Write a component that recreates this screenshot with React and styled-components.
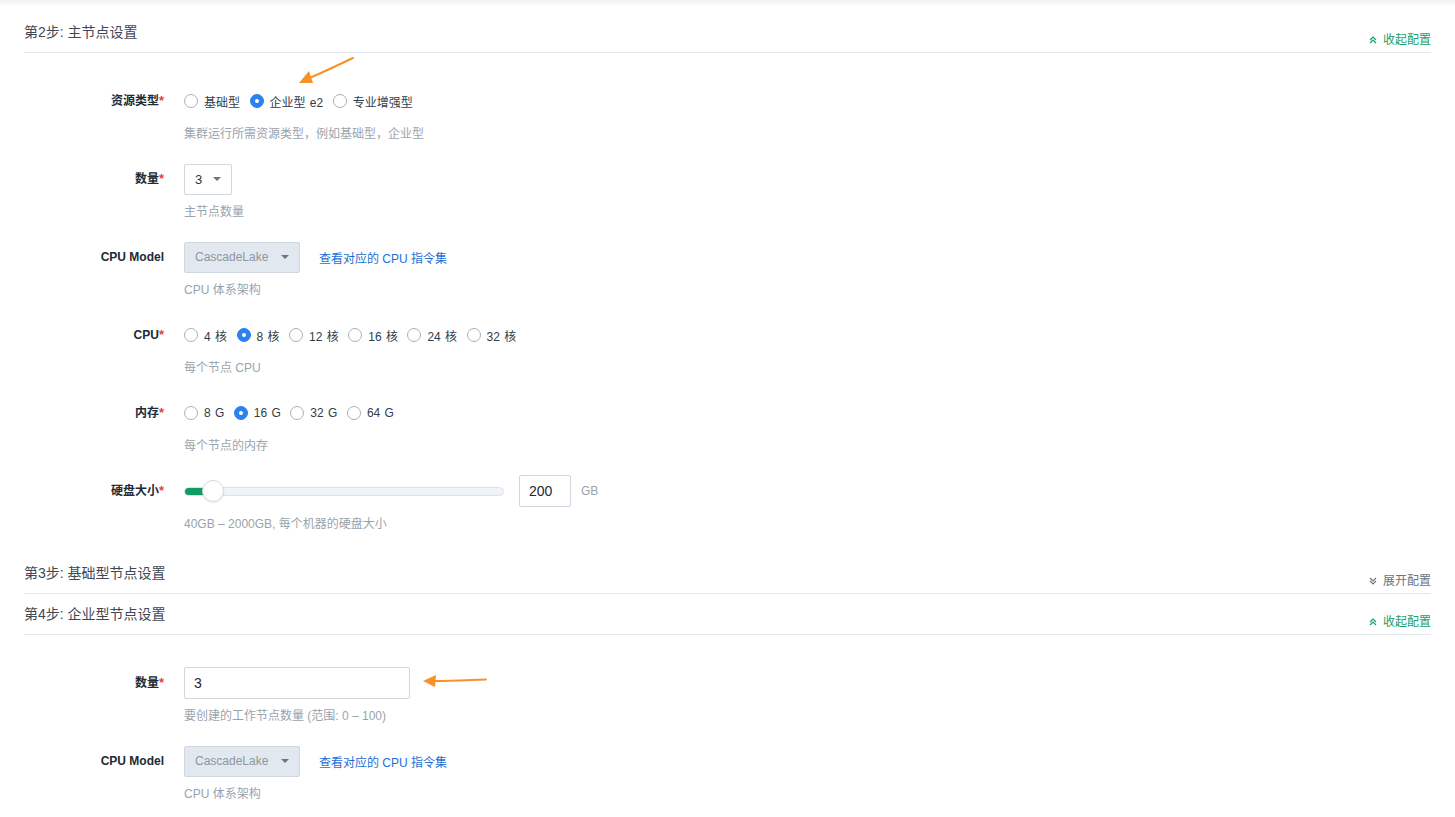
import React from "react";
import styled, { createGlobalStyle } from "styled-components";

const GlobalStyle = createGlobalStyle`
    html, body {
        margin: 0;
        padding: 0;
        background: #ffffff;
    }
    body {
        font-family: "Liberation Sans", "Noto Sans CJK SC", sans-serif;
        color: #333d48;
        font-size: 12px;
    }
`;

const Page = styled.div`
    position: relative;
    padding: 12px 24px 0 24px;
    height: 817px;
    box-sizing: border-box;
    overflow: hidden;
    background: linear-gradient(#f1f2f4 0px, #ffffff 6px);
`;

const StepHeader = styled.div`
    display: flex;
    justify-content: space-between;
    align-items: flex-end;
    height: 40px;
    border-bottom: 1px solid #e3e8ee;
`;

const StepTitle = styled.div`
    font-size: 14px;
    line-height: 20px;
    padding-bottom: 10px;
    color: #3f4855;
`;

const Toggle = styled.div`
    display: flex;
    align-items: center;
    gap: 6px;
    font-size: 12px;
    line-height: 16px;
    padding-bottom: 4px;
    color: ${(p) => (p.open ? "#17a06a" : "#6c7581")};
`;

const StepBody = styled.div`
    padding-top: 32px;
`;

const FormItem = styled.div`
    display: grid;
    grid-template-columns: 160px 1fr;
    margin-bottom: 20px;
`;

const Label = styled.div`
    height: 32px;
    line-height: 32px;
    text-align: right;
    padding-right: 20px;
    font-size: 12px;
    font-weight: 600;
    color: #212a35;
`;

const Star = styled.span`
    color: #e54040;
    font-weight: 700;
    font-size: 13px;
`;

const Control = styled.div`
    display: flex;
    align-items: center;
    height: 32px;
`;

const Hint = styled.div`
    margin-top: 8px;
    font-size: 12px;
    line-height: 18px;
    color: #9aa3ad;
`;

const RadioItem = styled.label`
    display: flex;
    align-items: center;
    gap: 6px;
    margin-right: 9.5px;
    font-size: 12px;
    word-spacing: 1px;
    color: #333d48;
    white-space: pre;
`;

const RadioDot = styled.span`
    width: 14px;
    height: 14px;
    box-sizing: border-box;
    border-radius: 50%;
    border: 1px solid ${(p) => (p.checked ? "#2a82f0" : "#a9b1ba")};
    background: ${(p) => (p.checked ? "#2a82f0" : "#fff")};
    display: flex;
    align-items: center;
    justify-content: center;
    &::after {
        content: "";
        width: 4px;
        height: 4px;
        border-radius: 50%;
        background: #fff;
        display: ${(p) => (p.checked ? "block" : "none")};
    }
`;

const Select = styled.div`
    display: flex;
    align-items: center;
    justify-content: space-between;
    box-sizing: border-box;
    width: ${(p) => p.width}px;
    height: 31px;
    padding: 0 10px 0 10px;
    border: 1px solid #cfd6de;
    border-radius: 2px;
    background: ${(p) => (p.disabled ? "#e1e8ef" : "#fff")};
    color: ${(p) => (p.disabled ? "#8c96a1" : "#2c3540")};
    font-size: ${(p) => (p.disabled ? "12px" : "13px")};
`;

const Caret = styled.span`
    width: 0;
    height: 0;
    border-left: 4px solid transparent;
    border-right: 4px solid transparent;
    border-top: 4px solid #6b7480;
`;

const DocLink = styled.a`
    margin-left: 19px;
    color: #1d6fd6;
    font-size: 12px;
    text-decoration: none;
`;

const Slider = styled.div`
    position: relative;
    width: 320px;
    height: 9px;
    box-sizing: border-box;
    border: 1px solid #dbe2e9;
    border-radius: 5px;
    background: #f0f4f8;
`;

const SliderFill = styled.div`
    height: 100%;
    border-radius: 5px 0 0 5px;
    background: #0e9c63;
`;

const SliderThumb = styled.div`
    position: absolute;
    top: 50%;
    width: 22px;
    height: 22px;
    box-sizing: border-box;
    margin: -11px 0 0 -11px;
    border-radius: 50%;
    border: 1px solid #d3dbe3;
    background: #fff;
    box-shadow: 0 1px 2px rgba(0, 0, 0, 0.08);
`;

const TextInput = styled.div`
    display: flex;
    align-items: center;
    box-sizing: border-box;
    width: ${(p) => p.width}px;
    height: 32px;
    margin-left: ${(p) => p.offset || 0}px;
    padding: 0 9px;
    border: 1px solid #cfd6de;
    border-radius: 2px;
    font-size: 14px;
    color: #1f2630;
`;

const Unit = styled.span`
    margin-left: 10px;
    color: #9aa3ad;
    font-size: 12px;
`;

const Arrow = styled.svg`
    position: absolute;
    left: ${(p) => p.x}px;
    top: ${(p) => p.y}px;
    overflow: visible;
`;

function Chevrons({ up }) {
    return (
        <svg width="8" height="8" viewBox="0 0 8 8" fill="none" stroke="currentColor" strokeWidth="1.2">
            {up ? (
                <>
                    <path d="M1 4 L4 1 L7 4" />
                    <path d="M1 7 L4 4 L7 7" />
                </>
            ) : (
                <>
                    <path d="M1 1 L4 4 L7 1" />
                    <path d="M1 4 L4 7 L7 4" />
                </>
            )}
        </svg>
    );
}

function Step({ title, open, children }) {
    return (
        <section>
            <StepHeader>
                <StepTitle>{title}</StepTitle>
                <Toggle open={open}>
                    <Chevrons up={open} />
                    {open ? "收起配置" : "展开配置"}
                </Toggle>
            </StepHeader>
            {open && <StepBody>{children}</StepBody>}
        </section>
    );
}

function Field({ label, required, hint, children }) {
    return (
        <FormItem>
            <Label>
                {label}
                {required && <Star>*</Star>}
            </Label>
            <div>
                <Control>{children}</Control>
                {hint && <Hint>{hint}</Hint>}
            </div>
        </FormItem>
    );
}

function Radios({ options, value }) {
    return options.map((o) => (
        <RadioItem key={o}>
            <RadioDot checked={o === value} />
            {o}
        </RadioItem>
    ));
}

function CpuModel() {
    return (
        <Field label="CPU Model" hint="CPU 体系架构">
            <Select width={116} disabled>
                CascadeLake
                <Caret />
            </Select>
            <DocLink>查看对应的 CPU 指令集</DocLink>
        </Field>
    );
}

const App = () => {
    const disk = 200;
    const pct = ((disk - 40) / (2000 - 40)) * 100 + 0.6;
    return (
        <>
            <GlobalStyle />
            <Page>
                <Step title="第2步: 主节点设置" open>
                    <Field label="资源类型" required hint="集群运行所需资源类型，例如基础型，企业型">
                        <Radios options={["基础型", "企业型 e2", "专业增强型"]} value="企业型 e2" />
                    </Field>
                    <Field label="数量" required hint="主节点数量">
                        <Select width={48}>
                            3
                            <Caret />
                        </Select>
                    </Field>
                    <CpuModel />
                    <Field label="CPU" required hint="每个节点 CPU">
                        <Radios options={["4 核", "8 核", "12 核", "16 核", "24 核", "32 核"]} value="8 核" />
                    </Field>
                    <Field label="内存" required hint="每个节点的内存">
                        <Radios options={["8 G", "16 G", "32 G", "64 G"]} value="16 G" />
                    </Field>
                    <Field label="硬盘大小" required hint="40GB – 2000GB, 每个机器的硬盘大小">
                        <Slider>
                            <SliderFill style={{ width: `${pct}%` }} />
                            <SliderThumb style={{ left: `${pct}%` }} />
                        </Slider>
                        <TextInput width={52} offset={15}>{disk}</TextInput>
                        <Unit>GB</Unit>
                    </Field>
                </Step>
                <Step title="第3步: 基础型节点设置" />
                <Step title="第4步: 企业型节点设置" open>
                    <Field label="数量" required hint="要创建的工作节点数量 (范围: 0 – 100)">
                        <TextInput width={226}>3</TextInput>
                    </Field>
                    <CpuModel />
                </Step>

                <Arrow x={298} y={56} width="60" height="30">
                    <path d="M55 2 C40 9 24 17 9 23" stroke="#f7912a" strokeWidth="2" fill="none" strokeLinecap="round" />
                    <path d="M1 27 L11 15 L15 27 Z" fill="#f7912a" />
                </Arrow>
                <Arrow x={422} y={674} width="70" height="14">
                    <path d="M64 5.5 C48 6 30 7 12 7" stroke="#f7912a" strokeWidth="2" fill="none" strokeLinecap="round" />
                    <path d="M1 7 L14 1 L13 13 Z" fill="#f7912a" />
                </Arrow>
            </Page>
        </>
    );
};

export default App;
